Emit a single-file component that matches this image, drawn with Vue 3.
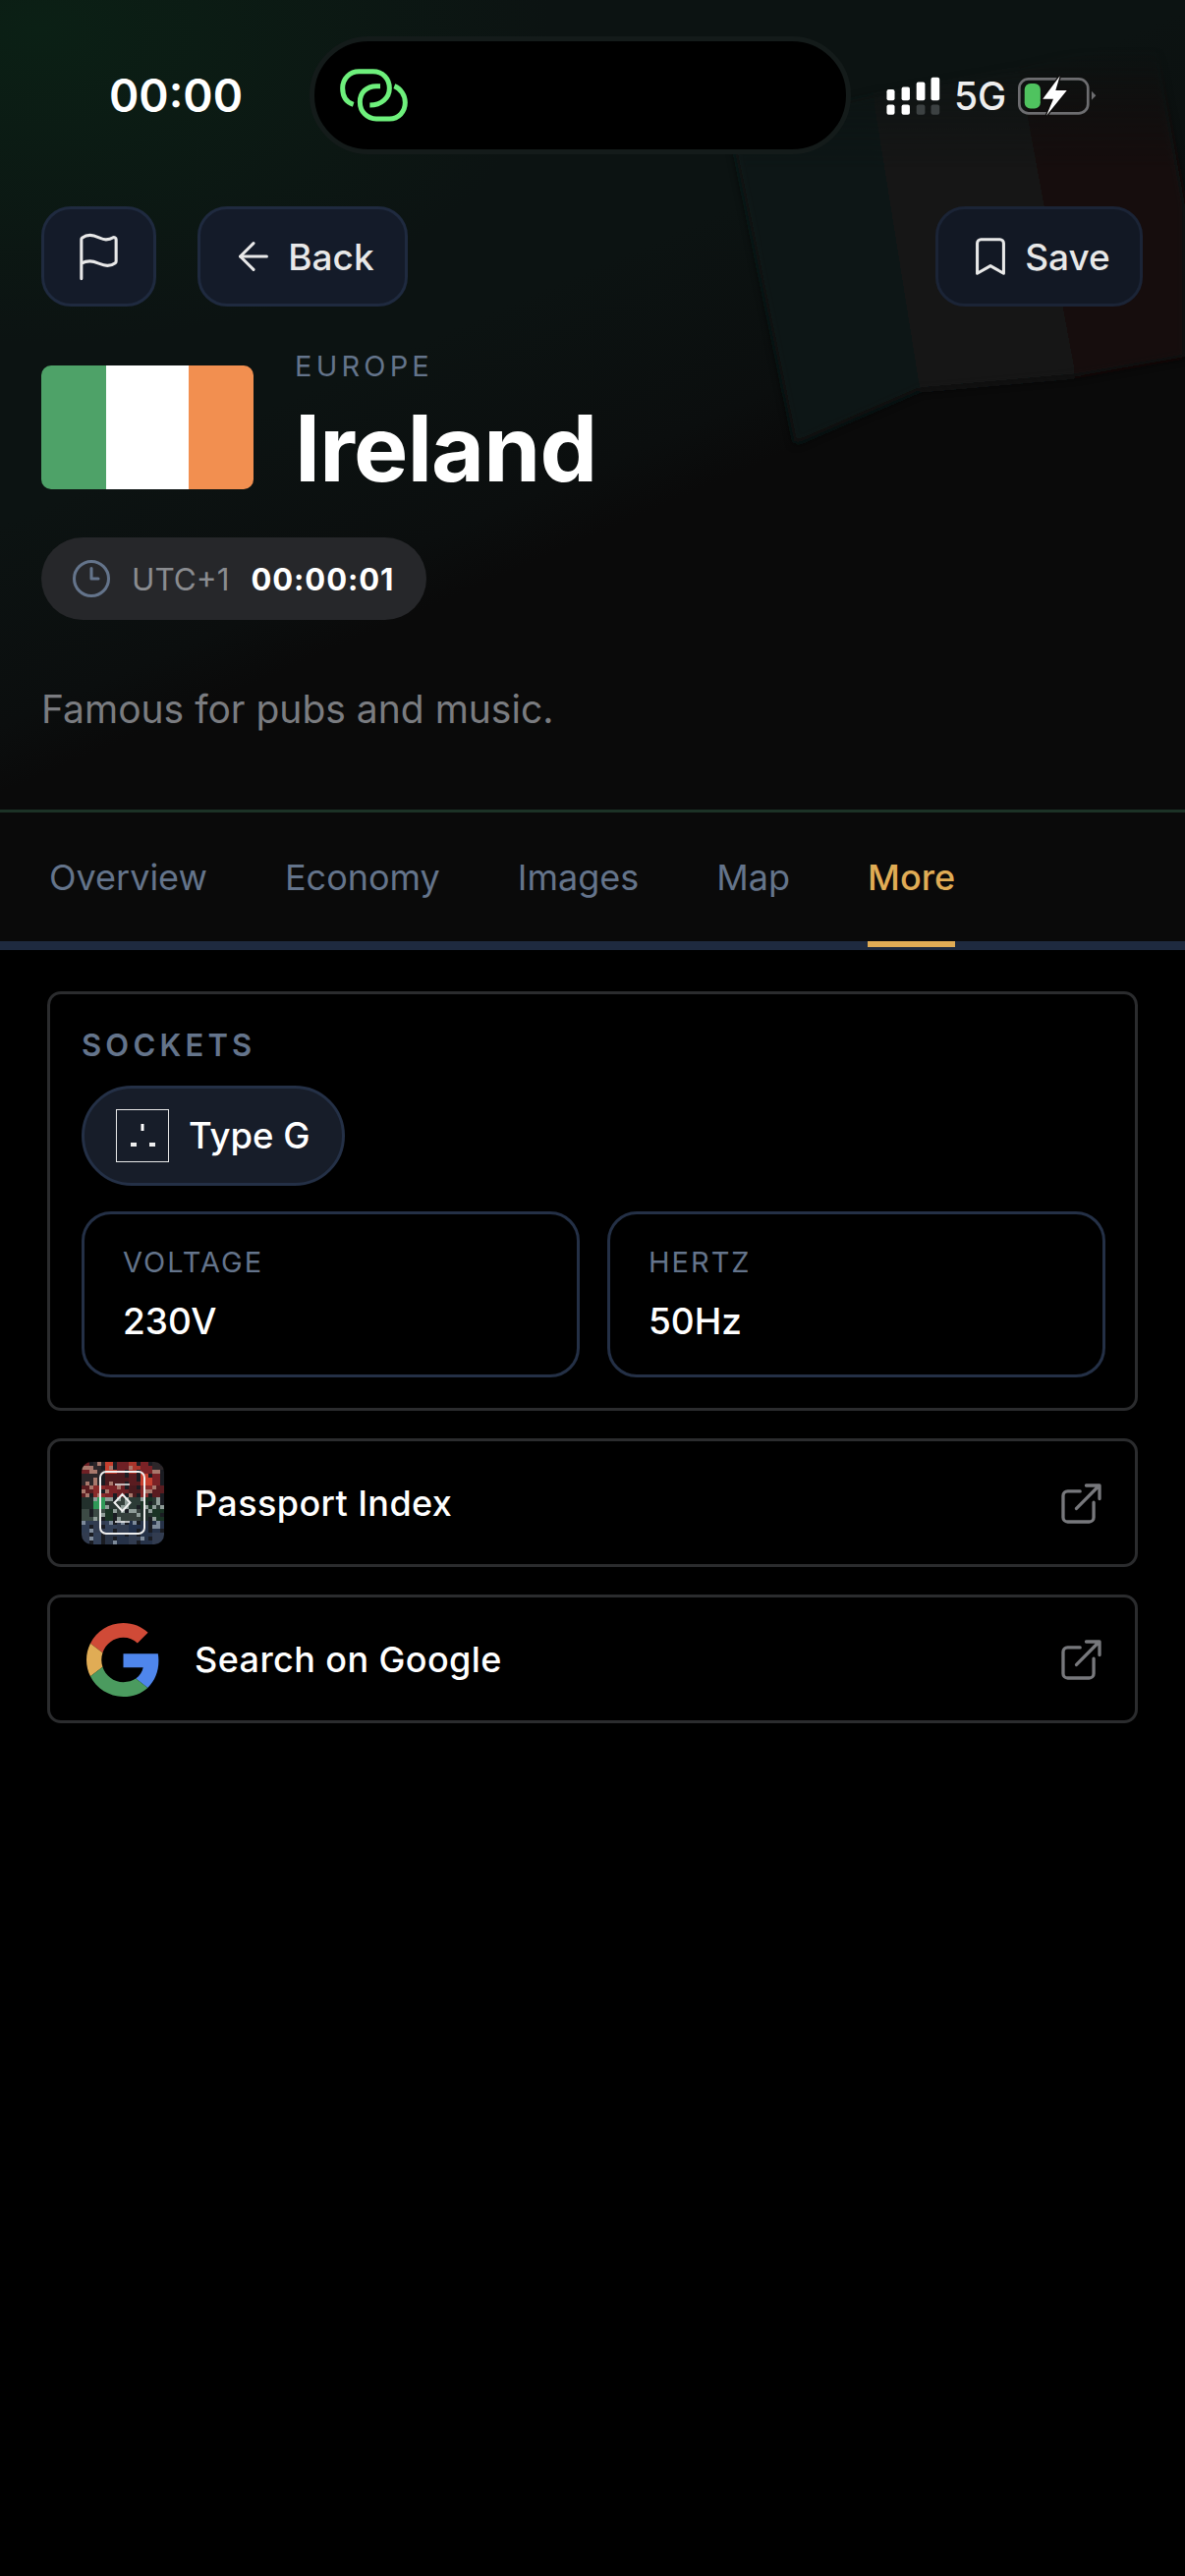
<script setup>
const tabs = ['Overview', 'Economy', 'Images', 'Map', 'More']

// Passport Index thumbnail: a wall of tiny passports, red on top, green, then navy
const bands = [
  { base: ['#6e2025', '#4c1a1e', '#7a2226', '#2c2629', '#5a1c20', '#8a2a2a', '#a8352b'], speck: '#a8786c' },
  { base: ['#1a3324', '#2a3632', '#343f3b', '#22302c', '#3c4a45', '#2c3b36', '#363f3c'], speck: '#8f9c98' },
  { base: ['#22304a', '#2a3446', '#344158', '#1f2838', '#2f3c52', '#263248', '#323c50'], speck: '#7d8a9a' },
]
let seed = 11
function rnd() {
  seed = (seed * 16807) % 2147483647
  return seed / 2147483647
}
const blocks = []
for (let y = 0; y < 7; y++) {
  const band = bands[y < 3 ? 0 : y < 5 ? 1 : 2]
  const row = []
  for (let x = 0; x < 7; x++) row.push(band.base[Math.floor(rnd() * band.base.length)])
  blocks.push({ row, speck: band.speck })
}
blocks[3].row[1] = '#2f9a58'
blocks[0].row[2] = '#c8402f'
blocks[1].row[5] = '#c8402f'
const cells = []
for (let y = 0; y < 21; y++) {
  for (let x = 0; x < 21; x++) {
    const b = blocks[Math.floor(y / 3)]
    let fill = b.row[Math.floor(x / 3)]
    if (x % 3 === 2 && rnd() < 0.5) fill = '#1a1c22'
    else if (rnd() < 0.16) fill = b.speck
    cells.push({ x: x * 4, y: y * 4, fill })
  }
}
</script>

<template>
  <div class="page">
    <header class="hero">
      <svg class="hero-bg" viewBox="0 0 1206 824" preserveAspectRatio="none" aria-hidden="true">
        <defs>
          <radialGradient id="glow" cx="0" cy="0" r="1" gradientUnits="userSpaceOnUse" gradientTransform="translate(40 30) scale(520 320)">
            <stop offset="0" stop-color="#0b2015" />
            <stop offset="1" stop-color="#0b2015" stop-opacity="0" />
          </radialGradient>
          <linearGradient id="base" gradientUnits="userSpaceOnUse" x1="470" y1="330" x2="570" y2="560">
            <stop offset="0" stop-color="#0c1312" />
            <stop offset=".75" stop-color="#0b0e0e" />
            <stop offset="1" stop-color="#0a0a0a" />
          </linearGradient>
          <linearGradient id="panelFade" x1="0" y1="0" x2="0" y2="1">
            <stop offset="0" stop-color="#fff" stop-opacity="0" />
            <stop offset=".1" stop-color="#fff" stop-opacity="0" />
            <stop offset=".36" stop-color="#fff" />
            <stop offset="1" stop-color="#fff" />
          </linearGradient>
          <mask id="panelMask"><rect width="1206" height="480" fill="url(#panelFade)" /></mask>
          <filter id="soft"><feGaussianBlur stdDeviation="4" /></filter>
        </defs>
        <rect width="1206" height="824" fill="url(#base)" />
        <g mask="url(#panelMask)" filter="url(#soft)">
          <polygon points="743,130 888,97 936,397 809,452" fill="#0d1613" />
          <polygon points="888,97 1037,70 1095,383 936,397" fill="#141718" />
          <polygon points="1037,70 1174,33 1206,210 1206,363 1095,383" fill="#120f0d" />
        </g>
        <rect width="1206" height="460" fill="url(#glow)" />
      </svg>

      <div class="status">
        <span class="clock">00:00</span>
        <div class="island">
          <svg class="link-icon" viewBox="130 110 225 180" fill="none" stroke="#6ef07c" stroke-width="15" stroke-linecap="butt">
            <path d="M180 228C155 220 147 200 147 178C147 148 170 127 197 127H240C270 127 290 150 290 178C290 208 265 230 230 230" />
            <path d="M262 172H250C220 172 200 192 200 220C200 250 222 272 250 272H290C318 272 338 250 338 222C338 200 325 180 305 172" />
          </svg>
        </div>
        <div class="status-right">
          <svg class="signal" viewBox="60 80 175 122" fill="#fff">
            <rect x="67" y="122" width="24" height="33" rx="6" />
            <rect x="112" y="114" width="25" height="41" rx="6" />
            <rect x="157" y="99" width="26" height="56" rx="6" />
            <rect x="201" y="85" width="26" height="70" rx="6" />
            <rect x="67" y="168" width="24" height="30" rx="6" />
            <rect x="112" y="168" width="25" height="30" rx="6" />
            <rect x="157" y="168" width="26" height="30" rx="6" fill="#3c4142" />
            <rect x="201" y="168" width="26" height="30" rx="6" fill="#3c4142" />
          </svg>
          <span class="net">5G</span>
          <svg class="battery" viewBox="470 82 238 120">
            <rect x="474" y="91" width="208" height="104" rx="28" fill="none" stroke="#6d6d70" stroke-width="8" />
            <rect x="490" y="105" width="48" height="76" rx="18" fill="#4fc35f" />
            <path d="M597 82L545 152H577L556 202L618 126H584Z" fill="#fff" stroke="#0e0c0c" stroke-width="8" paint-order="stroke" />
            <path d="M693 128L706 141L693 155Z" fill="#6d6d70" />
          </svg>
        </div>
      </div>

      <div class="actions">
        <button class="btn btn-square">
          <svg viewBox="0 0 24 24" width="53" height="53" fill="none" stroke="currentColor" stroke-width="1.4" stroke-linecap="round" stroke-linejoin="round">
            <path d="M4 22V4a1 1 0 0 1 .4-.8A6 6 0 0 1 8 2c3 0 5 2 7.333 2q2 0 3.067-.8A1 1 0 0 1 20 4v10a1 1 0 0 1-.4.8A6 6 0 0 1 16 16c-3 0-5-2-8-2a8 8 0 0 0-4 1" />
          </svg>
        </button>
        <button class="btn btn-back">
          <svg viewBox="0 0 24 24" width="46" height="46" fill="none" stroke="currentColor" stroke-width="1.6" stroke-linecap="round" stroke-linejoin="round">
            <path d="m12 19-7-7 7-7" /><path d="M19 12H5" />
          </svg>
          Back
        </button>
        <button class="btn btn-save">
          <svg viewBox="0 0 24 24" width="46" height="46" fill="none" stroke="currentColor" stroke-width="1.6" stroke-linecap="round" stroke-linejoin="round">
            <path d="m19 21-7-4-7 4V5a2 2 0 0 1 2-2h10a2 2 0 0 1 2 2v16z" />
          </svg>
          Save
        </button>
      </div>

      <div class="title-row">
        <div class="flag"><i class="green" /><i class="white" /><i class="orange" /></div>
        <div class="titles">
          <div class="region">EUROPE</div>
          <h1>Ireland</h1>
        </div>
      </div>

      <div class="tz">
        <svg viewBox="0 0 24 24" width="42" height="42" fill="none" stroke="#64748b" stroke-width="1.75" stroke-linecap="round" stroke-linejoin="round">
          <circle cx="12" cy="12" r="10" /><path d="M12 6v6h4" />
        </svg>
        <span class="tz-name">UTC+1</span>
        <span class="tz-time">00:00:01</span>
      </div>

      <p class="tagline">Famous for pubs and music.</p>
    </header>

    <nav class="tabs">
      <span v-for="t in tabs" :key="t" class="tab" :class="{ active: t === 'More' }">{{ t }}</span>
    </nav>

    <main class="content">
      <section class="card">
        <div class="card-title">SOCKETS</div>
        <div class="socket">
          <svg class="socket-icon" viewBox="0 0 54 54">
            <rect x=".5" y=".5" width="53" height="53" fill="none" stroke="#e8e8e8" />
            <rect x="25.500" y="15" width="3" height="7" fill="#fff" />
            <rect x="15" y="34" width="6" height="4" fill="#eee" />
            <rect x="34" y="34" width="6" height="4" fill="#eee" />
          </svg>
          Type G
        </div>
        <div class="specs">
          <div class="spec">
            <div class="spec-label">VOLTAGE</div>
            <div class="spec-value">230V</div>
          </div>
          <div class="spec">
            <div class="spec-label">HERTZ</div>
            <div class="spec-value">50Hz</div>
          </div>
        </div>
      </section>

      <a class="link">
        <svg class="thumb" viewBox="0 0 84 84">
          <rect v-for="(c, i) in cells" :key="i" :x="c.x" :y="c.y" width="4" height="4" :fill="c.fill" />
          <rect x="19" y="10" width="45" height="63" rx="6" fill="none" stroke="#f0f0f0" stroke-width="2" />
          <path d="M34 23H49M34 61H49" stroke="#f0f0f0" stroke-width="1.6" />
          <path d="M41.500 33L49.500 41.500L41.500 50L33.500 41.500Z" fill="none" stroke="#f0f0f0" stroke-width="2" />
        </svg>
        <span class="link-text">Passport Index</span>
        <svg class="ext" viewBox="235 205 130 130" fill="none" stroke="#77787c" stroke-width="10" stroke-linecap="round" stroke-linejoin="round">
          <path d="M296 232H258C250 232 244 238 244 246V312C244 320 250 326 258 326H324C332 326 338 320 338 312V266" />
          <path d="M285 285L355 214M315 214H356V255" />
        </svg>
      </a>

      <a class="link">
        <span class="thumb g-box">
          <svg viewBox="0 0 48 48" width="75" height="75">
            <path fill="#d04a37" d="M24 9.5c3.54 0 6.71 1.22 9.21 3.6l6.85-6.85C35.9 2.38 30.47 0 24 0 14.62 0 6.51 5.38 2.56 13.22l7.98 6.19C12.43 13.72 17.74 9.5 24 9.5z" />
            <path fill="#4f86ec" d="M46.98 24.55c0-1.57-.15-3.09-.38-4.55H24v9.02h12.94c-.58 2.96-2.26 5.48-4.78 7.18l7.73 6c4.51-4.18 7.09-10.36 7.09-17.65z" />
            <path fill="#e0ac55" d="M10.53 28.59c-.48-1.45-.76-2.99-.76-4.59s.27-3.14.76-4.59l-7.98-6.19C.92 16.46 0 20.12 0 24c0 3.88.92 7.54 2.56 10.78l7.97-6.19z" />
            <path fill="#4b9b5f" d="M24 48c6.48 0 11.93-2.13 15.89-5.81l-7.73-6c-2.15 1.45-4.92 2.3-8.16 2.3-6.26 0-11.57-4.22-13.47-9.91l-7.98 6.19C6.51 42.62 14.62 48 24 48z" />
          </svg>
        </span>
        <span class="link-text">Search on Google</span>
        <svg class="ext" viewBox="235 205 130 130" fill="none" stroke="#77787c" stroke-width="10" stroke-linecap="round" stroke-linejoin="round">
          <path d="M296 232H258C250 232 244 238 244 246V312C244 320 250 326 258 326H324C332 326 338 320 338 312V266" />
          <path d="M285 285L355 214M315 214H356V255" />
        </svg>
      </a>
    </main>
  </div>
</template>

<style>
html, body { background: #000; }
</style>

<style scoped>
.page {
  width: 1206px; min-height: 2622px;
  background: #000; color: #fff;
  font-family: Inter, "Noto Sans", sans-serif;
}

.hero {
  position: relative; overflow: hidden;
  width: 1121px; height: 787px; padding: 37px 43px 0 42px;
  border-bottom: 3px solid #1c3226;
}
.hero-bg { position: absolute; inset: 0; width: 100%; height: 100%; }
.hero > *:not(.hero-bg) { position: relative; }

.status { display: flex; align-items: center; height: 120px; }
.clock { width: 204px; margin-left: 69px; flex: none; font-size: 46px; font-weight: 600; line-height: 1; }
.island {
  display: flex; align-items: center;
  width: 551px; height: 120px; box-sizing: border-box;
  padding-left: 23px;
  background: #000; border: 5px solid #141b1a; border-radius: 60px;
}
.link-icon { width: 75px; height: 60px; margin-top: -1px; }
.status-right { display: flex; align-items: center; margin-left: 34px; }
.signal { width: 59px; height: 41px; }
.net { margin-left: 12px; font-size: 39px; font-weight: 500; color: #eee; }
.battery { width: 80px; height: 41px; margin-left: 12px; }

.actions { display: flex; gap: 42px; margin-top: 53px; }
.btn {
  display: flex; align-items: center; justify-content: center; gap: 12px;
  height: 102px; padding: 0; box-sizing: border-box;
  background: #141b29; border: 3px solid #1f2a3f; border-radius: 30px;
  color: #e8e8e8; font: 500 37px Inter, sans-serif;
}
.btn-square { width: 117px; }
.btn-back { width: 214px; }
.btn-save { width: 211px; margin-left: auto; background: #121824; border-color: #1b2436; }

.title-row { display: flex; gap: 42px; margin-top: 42px; }
.flag { display: flex; width: 216px; height: 126px; margin-top: 18px; border-radius: 10px; overflow: hidden; }
.flag i { display: block; }
.green { width: 66px; background: #4ea268; }
.white { width: 84px; background: #fff; }
.orange { width: 66px; background: #f28f50; }
.region { padding-top: 1px; font-size: 29px; line-height: 36px; letter-spacing: 4.2px; color: #64748b; }
h1 { margin: 15px 0 0; font-size: 93px; line-height: 100px; font-weight: 700; letter-spacing: -.8px; }

.tz {
  display: flex; align-items: center;
  width: 392px; height: 84px; box-sizing: border-box; padding-left: 30px; margin-top: 41px;
  background: #26272a; border-radius: 42px;
}
.tz-name { margin-left: 20px; font-size: 31.5px; color: #8a8c90; }
.tz-time { margin-left: 22px; font-size: 31px; font-weight: 700; letter-spacing: .9px; }
.tagline { margin: 66px 0 0; font-size: 39px; line-height: 50px; color: #7a7c80; }

.tabs {
  display: flex; gap: 79px; height: 131px; padding-left: 50px; align-items: center;
  background: #0a0a0a; border-bottom: 9px solid #1e2a3f;
}
.tab { position: relative; padding-top: 1px; font-size: 36px; line-height: 130px; color: #64748b; }
.tab.active { color: #e0ac55; font-weight: 500; }
.tab.active::after {
  content: ""; position: absolute; left: 0; right: 0; bottom: -6px; height: 6px;
  background: #e0ac55;
}

.content { display: flex; flex-direction: column; gap: 28px; padding: 42px 48px 0; }
.card { border: 3px solid #2b2c2e; border-radius: 14px; padding: 32px 30px 31px 32px; }
.card-title { font-size: 31px; line-height: 40px; font-weight: 600; letter-spacing: 4.2px; color: #64748b; }
.socket {
  display: inline-flex; align-items: center; gap: 20px;
  height: 102px; width: 268px; box-sizing: border-box; padding-left: 32px; margin-top: 21px;
  background: #171d29; border: 3px solid #243046; border-radius: 51px;
  font-size: 36.5px; font-weight: 500; white-space: nowrap;
}
.socket-icon { width: 54px; height: 54px; flex: none; }
.specs { display: grid; grid-template-columns: 1fr 1fr; gap: 28px; margin-top: 26px; }
.spec { height: 169px; box-sizing: border-box; padding: 31px 0 0 39px; border: 3px solid #243046; border-radius: 30px; }
.spec-label { font-size: 29px; line-height: 36px; letter-spacing: 2px; color: #64748b; }
.spec-value { margin-top: 19px; font-size: 37px; line-height: 46px; font-weight: 500; }

.link {
  display: flex; align-items: center; height: 131px; box-sizing: border-box;
  padding: 1px 33px 0 32px;
  border: 3px solid #2b2c2e; border-radius: 14px;
}
.thumb { width: 84px; height: 84px; flex: none; border-radius: 10px; }
.g-box { display: flex; align-items: center; justify-content: center; }
.link-text { margin-left: 31px; font-size: 36px; font-weight: 500; letter-spacing: .4px; }
.ext { width: 43px; height: 43px; margin-left: auto; }
</style>
